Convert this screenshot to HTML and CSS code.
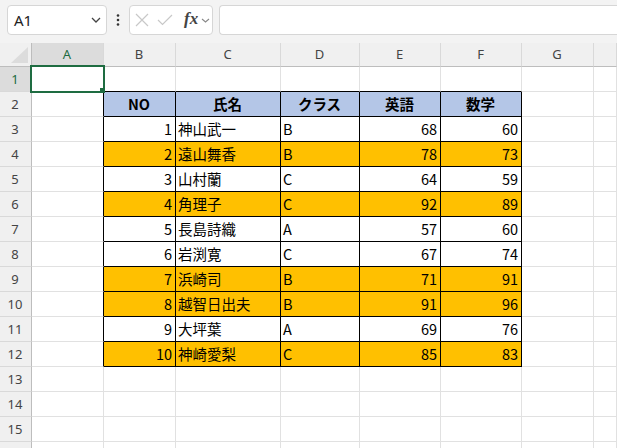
FILE: index.html
```html
<!DOCTYPE html>
<html lang="ja">
<head>
<meta charset="utf-8">
<link rel="stylesheet" href="styles.css">
</head>
<body>
<div class="toolbar">
  <div class="namebox"><span>A1</span>
    <svg class="chev" width="10" height="6" viewBox="0 0 10 6"><path d="M1 1 L5 5 L9 1" fill="none" stroke="#444" stroke-width="1.3"/></svg>
  </div>
  <div class="dots"><svg width="4" height="12" viewBox="0 0 4 12"><circle cx="2" cy="1.5" r="1.3" fill="#333"/><circle cx="2" cy="6" r="1.3" fill="#333"/><circle cx="2" cy="10.5" r="1.3" fill="#333"/></svg></div>
  <div class="fxbox">
    <svg width="14" height="14" viewBox="0 0 14 14"><path d="M1 1 L13 13 M13 1 L1 13" stroke="#c8c8c8" stroke-width="1.2" fill="none"/></svg>
    <svg width="16" height="12" viewBox="0 0 16 12"><path d="M1 6 L5.5 10.5 L15 1" stroke="#c8c8c8" stroke-width="1.2" fill="none"/></svg>
    <span class="fx">fx</span>
    <svg class="chev2" width="9" height="5" viewBox="0 0 9 5"><path d="M1 1 L4.5 4 L8 1" fill="none" stroke="#888" stroke-width="1.1"/></svg>
  </div>
  <div class="formula"></div>
</div>
<div class="sheet">
  <div class="c corner"><svg width="18" height="17" viewBox="0 0 18 17"><polygon points="17,0 17,16 0,16" fill="#dcdcdc"/></svg></div>
  <div class="c ch sel">A</div><div class="c ch">B</div><div class="c ch">C</div><div class="c ch">D</div><div class="c ch">E</div><div class="c ch">F</div><div class="c ch">G</div><div class="c ch"></div>

  <div class="c rh sel">1</div><div class="c a1"></div><div class="c eb"></div><div class="c eb"></div><div class="c eb"></div><div class="c eb"></div><div class="c eb"></div><div class="c"></div><div class="c"></div>

  <div class="c rh">2</div><div class="c er"></div><div class="c t hd">NO</div><div class="c t hd">氏名</div><div class="c t hd">クラス</div><div class="c t hd">英語</div><div class="c t hd">数学</div><div class="c"></div><div class="c"></div>

  <div class="c rh">3</div><div class="c er"></div><div class="c t n">1</div><div class="c t">神山武一</div><div class="c t">B</div><div class="c t n">68</div><div class="c t n">60</div><div class="c"></div><div class="c"></div>

  <div class="c rh">4</div><div class="c er"></div><div class="c t o n">2</div><div class="c t o">遠山舞香</div><div class="c t o">B</div><div class="c t o n">78</div><div class="c t o n">73</div><div class="c"></div><div class="c"></div>

  <div class="c rh">5</div><div class="c er"></div><div class="c t n">3</div><div class="c t">山村蘭</div><div class="c t">C</div><div class="c t n">64</div><div class="c t n">59</div><div class="c"></div><div class="c"></div>

  <div class="c rh">6</div><div class="c er"></div><div class="c t o n">4</div><div class="c t o">角理子</div><div class="c t o">C</div><div class="c t o n">92</div><div class="c t o n">89</div><div class="c"></div><div class="c"></div>

  <div class="c rh">7</div><div class="c er"></div><div class="c t n">5</div><div class="c t">長島詩織</div><div class="c t">A</div><div class="c t n">57</div><div class="c t n">60</div><div class="c"></div><div class="c"></div>

  <div class="c rh">8</div><div class="c er"></div><div class="c t n">6</div><div class="c t">岩渕寛</div><div class="c t">C</div><div class="c t n">67</div><div class="c t n">74</div><div class="c"></div><div class="c"></div>

  <div class="c rh">9</div><div class="c er"></div><div class="c t o n">7</div><div class="c t o">浜崎司</div><div class="c t o">B</div><div class="c t o n">71</div><div class="c t o n">91</div><div class="c"></div><div class="c"></div>

  <div class="c rh">10</div><div class="c er"></div><div class="c t o n">8</div><div class="c t o">越智日出夫</div><div class="c t o">B</div><div class="c t o n">91</div><div class="c t o n">96</div><div class="c"></div><div class="c"></div>

  <div class="c rh">11</div><div class="c er"></div><div class="c t n">9</div><div class="c t">大坪葉</div><div class="c t">A</div><div class="c t n">69</div><div class="c t n">76</div><div class="c"></div><div class="c"></div>

  <div class="c rh">12</div><div class="c er"></div><div class="c t o n">10</div><div class="c t o">神崎愛梨</div><div class="c t o">C</div><div class="c t o n">85</div><div class="c t o n">83</div><div class="c"></div><div class="c"></div>

  <div class="c rh">13</div><div class="c"></div><div class="c"></div><div class="c"></div><div class="c"></div><div class="c"></div><div class="c"></div><div class="c"></div><div class="c"></div>

  <div class="c rh">14</div><div class="c"></div><div class="c"></div><div class="c"></div><div class="c"></div><div class="c"></div><div class="c"></div><div class="c"></div><div class="c"></div>

  <div class="c rh">15</div><div class="c"></div><div class="c"></div><div class="c"></div><div class="c"></div><div class="c"></div><div class="c"></div><div class="c"></div><div class="c"></div>

  <div class="c rh"></div><div class="c"></div><div class="c"></div><div class="c"></div><div class="c"></div><div class="c"></div><div class="c"></div><div class="c"></div><div class="c"></div>
</div>
</body>
</html>
```
FILE: styles.css
```css
html, body {
  margin: 0;
  padding: 0;
}
body {
  width: 617px;
  height: 448px;
  overflow: hidden;
  background: #ffffff;
  font-family: "Noto Sans CJK JP", "Noto Sans", sans-serif;
  color: #000;
}
.toolbar {
  height: 43px;
  box-sizing: border-box;
  background: #f3f3f3;
  display: flex;
  align-items: flex-start;
  padding: 5px 0 0 7px;
}
.namebox {
  width: 100px;
  height: 30px;
  box-sizing: border-box;
  border: 1px solid #d6d6d6;
  border-radius: 4px;
  background: #fff;
  display: flex;
  align-items: center;
  justify-content: space-between;
  padding: 0 5px 0 6px;
  font-family: "Noto Sans", sans-serif;
  font-size: 15px;
  color: #222;
}
.dots {
  width: 22px;
  height: 30px;
  display: flex;
  align-items: center;
  justify-content: center;
}
.fxbox {
  width: 84px;
  height: 30px;
  box-sizing: border-box;
  border: 1px solid #d6d6d6;
  border-radius: 4px;
  background: #fff;
  display: flex;
  align-items: center;
  padding: 0 0 0 5px;
  gap: 8px;
}
.fx {
  font-family: "Liberation Serif", serif;
  font-style: italic;
  font-weight: bold;
  font-size: 17px;
  color: #444;
  margin-left: 3px;
  margin-top: -2px;
}
.chev2 {
  margin-left: -5px;
}
.formula {
  flex: 1;
  height: 30px;
  box-sizing: border-box;
  margin-left: 6px;
  border: 1px solid #d6d6d6;
  border-right: none;
  border-radius: 4px 0 0 4px;
  background: #fff;
}
.sheet {
  display: grid;
  grid-template-columns: 32px 72px 72px 105px 79px 81px 81px 72px 1fr;
  grid-template-rows: 24px;
  grid-auto-rows: 25px;
}
.c {
  box-sizing: border-box;
  border-right: 1px solid #e1e1e1;
  border-bottom: 1px solid #e1e1e1;
  display: flex;
  align-items: center;
  padding: 0 3px 0 2px;
  font-size: 14.5px;
  white-space: nowrap;
  overflow: hidden;
  line-height: 1;
}
.corner {
  background: #f0f0f0;
  border-right: 1px solid #bdbdbd;
  border-bottom: 1px solid #bdbdbd;
  align-items: flex-end;
  justify-content: flex-end;
  padding: 0 2px 2px 0;
}
.ch {
  background: #f0f0f0;
  border-right: 1px solid #d9d9d9;
  border-bottom: 1px solid #bdbdbd;
  justify-content: center;
  font-family: "Noto Sans", sans-serif;
  font-size: 13px;
  color: #444;
}
.rh {
  background: #f0f0f0;
  border-right: 1px solid #bdbdbd;
  border-bottom: 1px solid #d9d9d9;
  justify-content: center;
  font-family: "Noto Sans", sans-serif;
  font-size: 13px;
  color: #444;
}
.sel {
  background: #dcdcdc;
  color: #1e6b41;
}
.a1 {
  position: relative;
  overflow: visible;
  z-index: 2;
}
.a1::after {
  content: "";
  position: absolute;
  top: -2px;
  left: -2px;
  right: -2px;
  bottom: -2px;
  border: 2px solid #1e6c41;
}
.a1::before {
  content: "";
  position: absolute;
  width: 5px;
  height: 5px;
  right: -2px;
  bottom: -2px;
  background: #1e6c41;
  z-index: 3;
}
.eb {
  border-bottom-color: #000;
}
.er {
  border-right-color: #000;
}
.t {
  border-right-color: #000;
  border-bottom-color: #000;
}
.hd {
  background: #b4c6e7;
  font-weight: bold;
  justify-content: center;
}
.o {
  background: #ffc000;
}
.n {
  justify-content: flex-end;
}
```
